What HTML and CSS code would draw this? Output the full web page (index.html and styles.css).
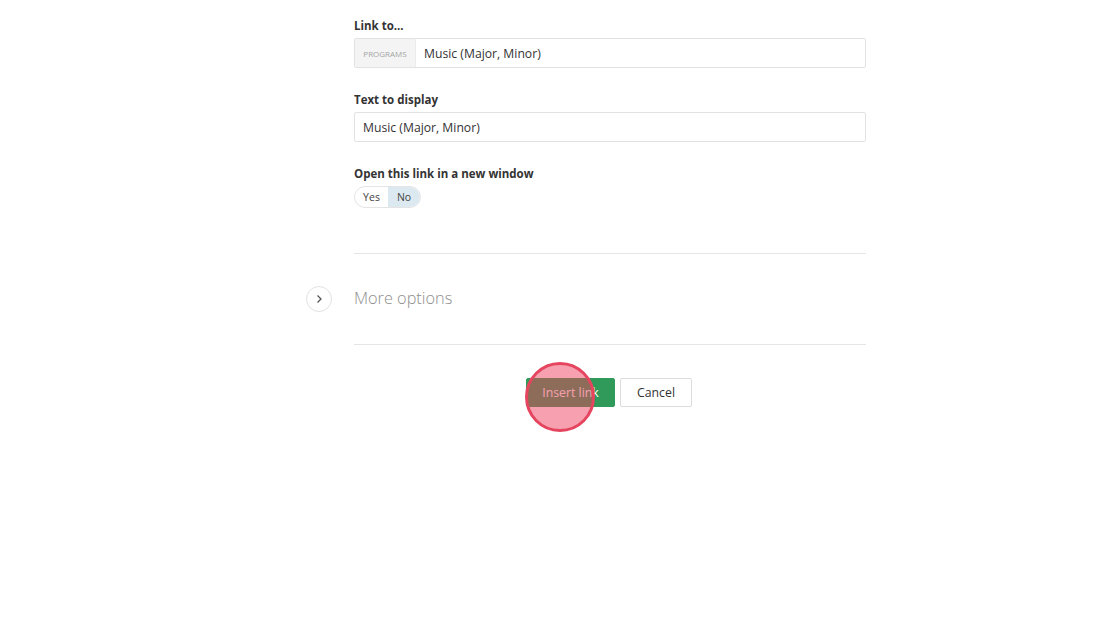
FILE: index.html
```html
<!DOCTYPE html>
<html>
<head>
<meta charset="utf-8">
<link rel="stylesheet" href="styles.css">
</head>
<body>
<div class="form">
  <div class="field">
    <div class="label">Link to...</div>
    <div class="input">
      <span class="prefix">PROGRAMS</span>
      <span class="value">Music (Major, Minor)</span>
    </div>
  </div>
  <div class="field">
    <div class="label">Text to display</div>
    <div class="input">
      <span class="value">Music (Major, Minor)</span>
    </div>
  </div>
  <div class="field last">
    <div class="label">Open this link in a new window</div>
    <div class="toggle">
      <span class="opt">Yes</span>
      <span class="opt active">No</span>
    </div>
  </div>
  <div class="more">
    <span class="chev">
      <svg width="10" height="10" viewBox="0 0 10 10"><path d="M3.5 1.5 L7 5 L3.5 8.5" fill="none" stroke="#555" stroke-width="1.3"/></svg>
    </span>
    <span class="more-text">More options</span>
  </div>
  <div class="actions">
    <div class="btn-wrap">
      <button class="btn primary">Insert link</button>
      <span class="click"></span>
    </div>
    <button class="btn">Cancel</button>
  </div>
</div>
</body>
</html>
```
FILE: styles.css
```css
html, body {
  margin: 0;
  padding: 0;
  background: #fff;
}
body {
  font-family: "Open Sans", "Liberation Sans", sans-serif;
  color: #333;
  min-height: 626px;
}
.form {
  width: 512px;
  margin-left: 354px;
  padding-top: 18px;
}
.field {
  margin-bottom: 24px;
}
.field.last {
  margin-bottom: 45px;
}
.label {
  font-size: 11.5px;
  font-weight: 700;
  line-height: 16px;
  color: #333;
  margin-bottom: 4px;
}
.input {
  display: flex;
  align-items: stretch;
  border: 1px solid #e2e2e2;
  border-radius: 2px;
  box-sizing: border-box;
  height: 30px;
}
.prefix {
  display: flex;
  align-items: center;
  justify-content: center;
  background: #f4f4f4;
  color: #a4a4a4;
  font-size: 8px;
  width: 61px;
  box-sizing: border-box;
  border-right: 1px solid #ececec;
}
.value {
  display: flex;
  align-items: center;
  font-size: 12.2px;
  color: #333;
  padding-left: 8px;
}
.toggle {
  display: flex;
  width: max-content;
  height: 22px;
  border: 1px solid #e4e4e4;
  border-radius: 11px;
  overflow: hidden;
  box-sizing: border-box;
}
.opt {
  display: flex;
  align-items: center;
  justify-content: center;
  font-size: 10.5px;
  color: #444;
  width: 33px;
}
.opt.active {
  background: #dde9f1;
  width: 32px;
}
.more {
  display: flex;
  align-items: center;
  height: 92px;
  border-top: 1px solid #e6e6e6;
  border-bottom: 1px solid #e6e6e6;
  box-sizing: border-box;
}
.chev {
  display: flex;
  align-items: center;
  justify-content: center;
  width: 26px;
  height: 26px;
  box-sizing: border-box;
  border: 1px solid #e2e2e2;
  border-radius: 50%;
  margin-left: -48px;
  margin-right: 22px;
}
.more-text {
  font-size: 16.3px;
  font-weight: 300;
  color: #8e8e8e;
  margin-bottom: 2px;
}
.actions {
  display: flex;
  justify-content: center;
  gap: 5px;
  margin-top: 33px;
  padding-right: 2px;
}
.btn-wrap {
  position: relative;
  display: flex;
}
.btn {
  font-family: "Open Sans", "Liberation Sans", sans-serif;
  font-size: 12.3px;
  height: 29px;
  padding: 0 16px;
  border: 1px solid #dcdcdc;
  border-radius: 2px;
  background: #fff;
  color: #333;
  white-space: nowrap;
}
.btn.primary {
  background: #2f9a59;
  border-color: #2f9a59;
  color: #fff;
  width: 89px;
  padding: 0;
}
.click {
  position: absolute;
  left: -1px;
  top: -16px;
  width: 70px;
  height: 70px;
  box-sizing: border-box;
  border-radius: 50%;
  border: 3px solid #e5455f;
  background: rgba(239, 61, 92, 0.49);
}
```
